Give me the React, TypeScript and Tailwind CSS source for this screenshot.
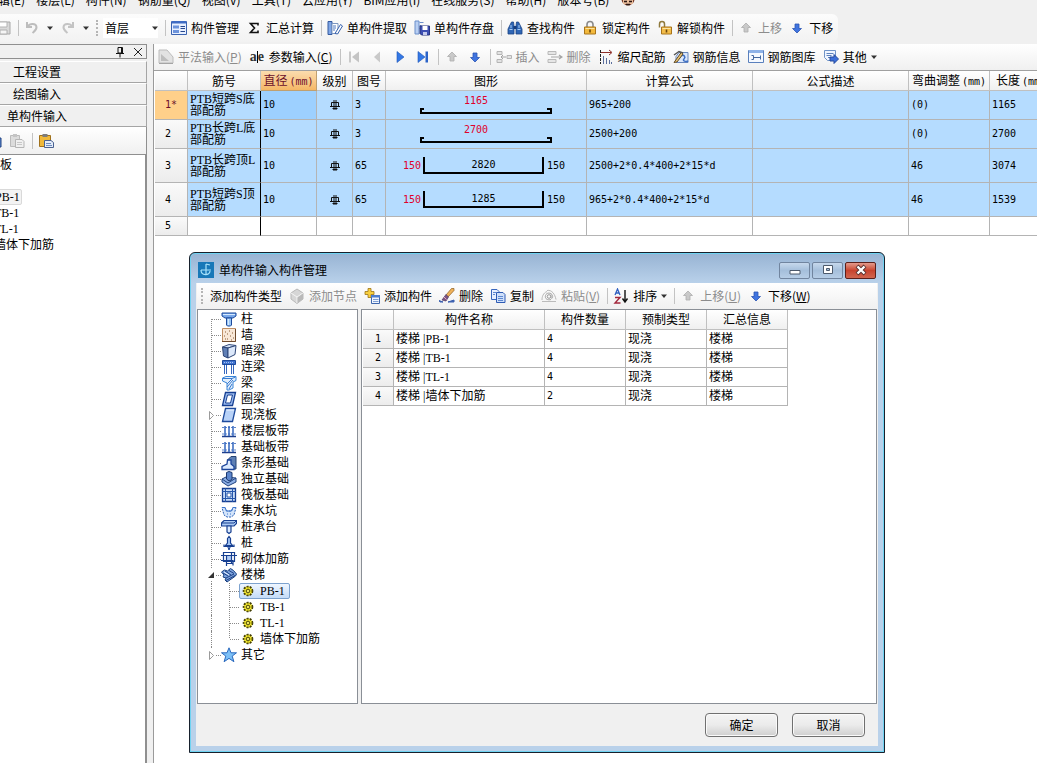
import React, { useState } from "react";

// 16x16 icon drawings, keyed by name
const icons: Record<string, React.ReactNode> = {
  save: (
    <>
      <path d="M1 2h14v12H1z" fill="#d9d9d9" stroke="#a8a8a8" />
      <path d="M4 2h8v5H4z" fill="#fff" stroke="#b5b5b5" />
      <path d="M5 10h7v4H5z" fill="#f5f5f5" stroke="#b0b0b0" />
    </>
  ),
  undo: <path d="M3 2v5h5M3.500 6.500C6 3 12 3 12.500 7c.3 2.500-2 4-4 6" fill="none" stroke="#bdbdbd" strokeWidth="2" />,
  redo: <path d="M13 2v5H8M12.500 6.500C10 3 4 3 3.500 7c-.3 2.500 2 4 4 6" fill="none" stroke="#c4c4c4" strokeWidth="2" />,
  manage: (
    <>
      <path d="M.5 1.500h15v13H.5z" fill="#e8f0ff" stroke="#3a62b0" />
      <path d="M1 1h14v2.500H1z" fill="#3f6cc4" />
      <path d="M2 5.500h6v3H2zM2 10h6v3H2z" fill="#6d94dc" />
      <path d="M9.500 6.500H14M9.500 8.500H14M9.500 11.500H14" stroke="#27488f" />
    </>
  ),
  sum: <path d="M12 5.500V3.500H4.500L8.500 8l-4 4.500H12v-2" fill="none" stroke="#111" strokeWidth="1.600" />,
  extract: (
    <>
      <path d="M1 1.500h4v13H1z" fill="#7fa6e6" stroke="#345a9f" />
      <path d="M5 3.500h6v10H5z" fill="#fff" stroke="#7d96bf" />
      <path d="M6 6h3M6 8h3M6 10h2" stroke="#5178bd" />
      <path d="M8 13.500l5.500-9 2 1.500-5 8z" fill="#fff" stroke="#3560ad" />
    </>
  ),
  store: (
    <>
      <path d="M1 1h4v13H1z" fill="#b8cef2" stroke="#6b8fca" />
      <path d="M5.500 2.500h4M5.500 5.500h2M5.500 8.500h1" stroke="#6b8fca" />
      <path d="M6 6h9.500v9H7.500L6 13.500z" fill="#3d4fb3" stroke="#27357f" />
      <path d="M8.500 6h5v4h-5z" fill="#fff" />
      <path d="M9 12h4v3H9z" fill="#c4cbee" />
    </>
  ),
  find: (
    <>
      <path d="M3 5l1.500-3h2L7 6v8H1V9zM13 5l-1.500-3h-2L9 6v8h6V9z" fill="#2f66b5" stroke="#1a4184" strokeWidth=".8" />
      <path d="M6.500 6h3v3h-3z" fill="#173d7d" />
      <path d="M2.500 9.500h3M10.500 9.500h3M4 5v3M12 5v3" stroke="#a9cbf4" />
    </>
  ),
  lock: (
    <>
      <path d="M5 8V4.500a3 3 0 016 0V8" fill="none" stroke="#8b8b8b" strokeWidth="1.600" />
      <path d="M2.500 7h11v7h-11z" fill="#f3b93c" stroke="#a8741a" />
      <path d="M3.500 8.500h9" stroke="#fce5a3" />
      <path d="M8 9.500v3" stroke="#6b460b" strokeWidth="1.600" />
    </>
  ),
  unlock: (
    <>
      <path d="M2.500 7.500V4a2.500 2.500 0 015 0v3" fill="none" stroke="#8f7a3d" strokeWidth="1.500" />
      <path d="M4.500 7h10v7h-10z" fill="#f3bd4a" stroke="#a8741a" />
      <path d="M5.500 8.500h8" stroke="#fce5a3" />
      <path d="M9.500 9.500v3" stroke="#6b460b" strokeWidth="1.600" />
    </>
  ),
  up: <path d="M8 3l4.500 4.500h-2.500V12H6V7.500H3.500z" fill="#c9c9c9" stroke="#adadad" strokeWidth=".8" />,
  down: <path d="M8 13l4.500-4.500h-2.500V4H6v4.500H3.500z" fill="#3f74e0" stroke="#2c55b3" strokeWidth=".8" />,
  flat: (
    <>
      <path d="M1 1h8l6 7v6H1z" fill="#e2e2e2" stroke="#bcbcbc" />
      <path d="M3 12V5l8 7z" fill="#bdbdbd" />
      <path d="M1 14.500h14" stroke="#a5a5a5" />
    </>
  ),
  first: (
    <>
      <path d="M3 2.500h2v11H3z" fill="#c9c9c9" />
      <path d="M13 2.500v11L6 8z" fill="#c4c4c4" />
    </>
  ),
  prev: <path d="M11 2.500v11L5 8z" fill="#c9c9c9" />,
  next: <path d="M5 2.500v11L12 8z" fill="#3478e5" stroke="#1f55b5" strokeWidth=".6" />,
  last: (
    <>
      <path d="M3 2.500v11l7-5.500z" fill="#3478e5" stroke="#1f55b5" strokeWidth=".6" />
      <path d="M10.500 2.500h2.500v11h-2.500z" fill="#2b63c8" />
    </>
  ),
  insert: (
    <>
      <path d="M1 2.500h5v3H1zM1 10.500h5v3H1z" fill="#e3e3e3" stroke="#b5b5b5" />
      <path d="M11 6.500h4.500v3H11z" fill="#e3e3e3" stroke="#b5b5b5" />
      <path d="M5 8h5M7 6L5 8l2 2" fill="none" stroke="#a2a2a2" />
    </>
  ),
  remove: (
    <>
      <path d="M1 2.500h8v3H1zM1 10.500h8v3H1z" fill="#e6e6e6" stroke="#b9b9b9" />
      <path d="M4 8h10M12 6l3 2-3 2" fill="none" stroke="#a5a5a5" strokeWidth="1.200" />
    </>
  ),
  scale: (
    <>
      <path d="M3 3.500h10M11 1l3 2.500L11 6" fill="none" stroke="#8e2f2a" />
      <path d="M2.500 1v14" stroke="#222" strokeDasharray="3 1" />
      <path d="M5.500 7v8M8.500 9v6M11.500 11v4M13.500 13v2" stroke="#5b6f9d" />
    </>
  ),
  rebarInfo: (
    <>
      <path d="M6 3.500h9v10H3v-6z" fill="#dbe7fb" stroke="#6887bd" />
      <path d="M8 7c3-2 5 1 3 3s2 3 4 2" fill="none" stroke="#3d6fc4" strokeWidth="1.500" />
      <path d="M1 13.500L8.500 3 10 5l-6 8z" fill="#eac474" stroke="#614b26" />
      <path d="M1 6l5-3.500 4 1.500" fill="none" stroke="#545454" strokeWidth="1.500" />
    </>
  ),
  library: (
    <>
      <path d="M.5 1.500h15v12H.5z" fill="#f5f9ff" stroke="#5a80bd" />
      <path d="M1 1h14v3H1z" fill="#8eb2e8" />
      <path d="M3.500 6.500h2v4h-2M5 8.500h7M12.500 6.500v4" stroke="#4468a0" fill="none" />
    </>
  ),
  other: (
    <>
      <path d="M1.500 1.500h11v10h-8l-3-3z" fill="#eff5ff" stroke="#6f93c7" />
      <path d="M3.500 4.500h7M3.500 6.500h5M5 8.500h3" stroke="#5d82bd" />
      <path d="M7 8h4V5.500l4.500 4.500-4.500 4.500V12H7z" fill="#3c6fd8" stroke="#244a9e" />
    </>
  ),
  pasteOff: (
    <>
      <path d="M1.500 2.500h9v11h-9z" fill="#dcdcdc" stroke="#bbb" />
      <path d="M4 1h4v3H4z" fill="#c4c4c4" />
      <path d="M6.500 6.500H13l2 2v6H6.500z" fill="#f0f0f0" stroke="#b5b5b5" />
      <path d="M8 9.500h5M8 11.500h5" stroke="#c8c8c8" />
    </>
  ),
  paste: (
    <>
      <path d="M1.500 2.500h11v11h-11z" fill="#f0b93a" stroke="#a0711c" />
      <path d="M4.500 1h5v3h-5z" fill="#7d7d7d" />
      <path d="M6.500 7.500H13l2.500 2v5h-9z" fill="#e3ecfa" stroke="#4a6291" />
      <path d="M8 10.500h5M8 12.500h6" stroke="#6f8cbd" />
    </>
  ),
  copyOn: <path d="M7 5h8v9H7z" fill="#5f8ad0" stroke="#1f4080" />,
  node: (
    <>
      <path d="M8 1l6 4v6l-6 4.500L2 11V5z" fill="#d6d6d6" stroke="#b8b8b8" />
      <path d="M2 5l6 4 6-4M8 9v6" fill="none" stroke="#f5f5f5" />
      <path d="M8.500 9.500L14 5.500V11l-5.500 4z" fill="#b9b9b9" />
    </>
  ),
  addPart: (
    <>
      <path d="M4 .5h3v3h3v3H7v3H4v-3H1v-3h3z" fill="#f8cf3f" stroke="#9c7514" strokeWidth=".8" />
      <path d="M7.500 7.500h8v8h-8z" fill="#eff5ff" stroke="#3e66ad" />
      <path d="M7 7h9v2.500H7z" fill="#4c7dd0" />
      <path d="M9 11.500h5.500M9 13.500h5.500" stroke="#7f9fd3" />
    </>
  ),
  brush: (
    <>
      <path d="M15 .5h-2.500L7 7l2 2 6-6.500z" fill="#f0b25a" stroke="#8a5b1f" strokeWidth=".7" />
      <path d="M7 6.500l2.500 2.500L7 13l-4-1z" fill="#7b5686" stroke="#4f3560" strokeWidth=".7" />
      <path d="M5 9l2.500 2.500" stroke="#e6a9b8" />
      <path d="M0 12.500l4 1.500h-3zM9 14l6-2v2z" fill="#4468b5" stroke="#3b5fae" />
    </>
  ),
  copy: (
    <>
      <path d="M1.500 1.500H7l2 2v8H1.500z" fill="#e7efff" stroke="#3967bd" />
      <path d="M6.500 4.500H13l2 2v8H6.500z" fill="#cfe0fb" stroke="#2e5bb4" />
      <path d="M3 4.500h3M3 6.500h2M8 8.500h5M8 10.500h5M8 12.500h5" stroke="#5e88d0" />
    </>
  ),
  pasteAt: (
    <>
      <path d="M1 12c0-3 1-7 5-8.500M6 2.500c5-1 8 4 9 9" fill="none" stroke="#b8b8b8" />
      <circle cx="8" cy="8.500" r="1.800" fill="none" stroke="#999" />
      <path d="M10 6.500v3.500c1 1 2 0 1.500-2.500-1-3-6-3.500-7 0s2.500 5 5.500 4" fill="none" stroke="#a5a5a5" />
      <path d="M1 13.500h14" stroke="#bbb" />
    </>
  ),
  sort: (
    <>
      <path d="M2 7l2.500-6L7 7M3 5h3" fill="none" stroke="#2f5fc0" strokeWidth="1.300" />
      <path d="M2 9.500h5L2 15h5.500" fill="none" stroke="#a3273c" strokeWidth="1.400" />
      <path d="M12 2v11M9.500 10.500L12 14l2.500-3.500" fill="none" stroke="#111" strokeWidth="1.400" />
    </>
  ),
  column: (
    <>
      <path d="M1 2h14v3l-3 2H4L1 5z" fill="#79a8ea" stroke="#1d4a9c" />
      <path d="M5.500 7h5v7l-1 1h-3l-1-1z" fill="#9cc8f6" stroke="#1d4a9c" />
      <path d="M2 3.500h12M7.500 8v6" stroke="#d6eaff" />
    </>
  ),
  wall: (
    <>
      <path d="M1.500 1.500h13v13h-13z" fill="#f8e8d8" stroke="#c08f64" />
      <path d="M4 5h1M8 4h1M11 6h1M6 7h1M3 9h1M9 9h1M12 11h1M6 12h1M10 13h1M4 12h1" stroke="#875a34" />
      <path d="M1 14.500h13.500V2" fill="none" stroke="#6e4a2d" />
    </>
  ),
  hiddenBeam: (
    <>
      <path d="M1.500 4L8 1.500l7 1L7 5z" fill="#d2e2f8" stroke="#3a4f7d" />
      <path d="M1.500 4L7 5v10l-4.500-2z" fill="#5f7fb5" stroke="#2d4576" />
      <path d="M7 5l8-2.500-1 9L7 15z" fill="#dce8fa" stroke="#2d4576" />
    </>
  ),
  linkBeam: (
    <>
      <path d="M1.500 1.500h13v4h-13z" fill="#3f72cf" stroke="#1d4a9c" />
      <path d="M3.500 6v9M5.500 6v9M10.500 6v9M12.500 6v9" stroke="#3567be" />
      <path d="M3 3.500h10" stroke="#a9c6f3" strokeDasharray="1 1" />
    </>
  ),
  beam: (
    <>
      <path d="M1.500 3L5 1.500h10v4L12 7v6l-4 2H6V8L1.500 6z" fill="#e1eefc" stroke="#3a86d8" />
      <path d="M2 3.500h9L14.500 2M6 9l5-5M6 12l6-7M8 14l3-5" fill="none" stroke="#3a7bd0" />
    </>
  ),
  ringBeam: (
    <>
      <path d="M4.500 1.500h10l-3 13h-10z" fill="#9dbdf0" stroke="#173f91" strokeWidth="1.300" />
      <path d="M6.500 4h5l-2 8h-5z" fill="#fff" stroke="#173f91" />
    </>
  ),
  slab: (
    <>
      <path d="M4.500 1.500h10l-3 13h-10z" fill="#b8d2f8" stroke="#1d4a9c" strokeWidth="1.300" />
      <path d="M5.500 3h7.500" stroke="#eef5ff" />
    </>
  ),
  strip: (
    <>
      <path d="M1 13.500h14" stroke="#1d3f8d" strokeWidth="1.500" />
      <path d="M1 4.500h14M1 11h14" stroke="#5f86cb" strokeDasharray="2 1" />
      <path d="M4 3v10M8 3v10M12 3v10" stroke="#3567be" strokeWidth="1.500" />
    </>
  ),
  stripBase: (
    <>
      <path d="M6.500 5L10 1.500h5V14h-3z" fill="#5d7fb4" stroke="#254273" />
      <path d="M6.500 5h3.500v4l3 2.500v3h-12v-3l5-2.500z" fill="#dcebff" stroke="#1c459b" strokeWidth="1.300" />
    </>
  ),
  soloBase: (
    <>
      <path d="M1 8l4-2 10 1v4l-8 4-6-4z" fill="#8eb0e6" stroke="#20427f" />
      <path d="M5.500 1.500L8 .5l3 1v7L8 10 5.500 8z" fill="#5c86cc" stroke="#1b386f" />
      <path d="M1 8l6 4 8-5" fill="none" stroke="#20427f" />
    </>
  ),
  raft: (
    <>
      <path d="M1.500 1.500h13v13h-13z" fill="#c7dcf8" stroke="#173f91" strokeWidth="1.300" />
      <path d="M4.500 1v14M11.500 1v14M1 4.500h14M1 11.500h14" stroke="#2556ab" />
      <path d="M6 6h4v4H6z" fill="#fff" stroke="#2556ab" />
    </>
  ),
  pit: (
    <>
      <path d="M1 4.500h3L5.500 8h5L12 4.500h3L13 12l-3 2H6l-3-2z" fill="#d4e5fb" stroke="#2c63b9" strokeDasharray="2 1" />
      <path d="M1 4.500h3L5.500 8h5L12 4.500h3M6 11h1M9 11h1" fill="none" stroke="#3c76cc" />
    </>
  ),
  pileCap: (
    <>
      <path d="M.5 4L3 1.500h12.500v3L13 7H.5z" fill="#a9c8f2" stroke="#173f91" strokeWidth="1.200" />
      <path d="M6 7h4v6l-2 1.500L6 13z" fill="#d9e9fd" stroke="#173f91" strokeWidth="1.200" />
      <path d="M1 4h12l2-2" fill="none" stroke="#173f91" />
    </>
  ),
  pile: (
    <>
      <path d="M6.500 3.500L8 1.500l1.500 2V8l2 2.500h-7l2-2.500z" fill="#a7c8f5" stroke="#173f91" strokeWidth="1.200" />
      <path d="M6.500 11h3L8 15z" fill="#a7c8f5" stroke="#173f91" />
      <path d="M3 9.500v2h10v-2" fill="none" stroke="#173f91" strokeWidth="1.200" />
    </>
  ),
  masonry: (
    <>
      <path d="M5 5h6v4H5z" fill="#aecbf5" />
      <path d="M2.500 1.500h11v9h-11zM0 4.500h16M0 9.500h12v5M5.500 4v11M10.500 1v11M5 12.500h7" fill="none" stroke="#173f91" strokeWidth="1.200" />
    </>
  ),
  stair: (
    <>
      <path d="M.5 5l3-2 3 1 3-2.500 3 2 3 3.500-1 2L6 15l-2-2 1-2-3-1 1-2z" fill="#7fa5df" stroke="#173f7f" />
      <path d="M2 6l5 3M4 4l6 4M8 3.500l5 3M5 11l8-4M5 13.500l9-5" fill="none" stroke="#1b3f85" />
      <path d="M3 5l5 3" stroke="#e5f0ff" />
    </>
  ),
  star: <path d="M8 .8l2 5h5.500l-4.300 3.300 1.700 5.600L8 11.400l-4.900 3.300 1.700-5.600L.5 5.800H6z" fill="#7cc0f7" stroke="#2a68bd" />,
  gear: (
    <>
      <circle cx="8" cy="8" r="4.500" fill="#f5ea2c" stroke="#3f3a08" strokeWidth="1.600" strokeDasharray="2 1.200" />
      <path d="M8 3v10M3 8h10M4.500 4.500l7 7M11.500 4.500l-7 7" stroke="#6f6812" strokeWidth=".6" />
      <circle cx="8" cy="8" r="1.600" fill="#fff66b" stroke="#3f3a08" strokeWidth=".8" />
    </>
  ),
};

function Icon({ name }: { name: string }) {
  return (
    <svg className="size-4 shrink-0" viewBox="0 0 16 16" aria-hidden="true">
      {icons[name]}
    </svg>
  );
}

// "a|e" mark of the parameter input command
function ParamIcon() {
  return (
    <span className="flex w-4 shrink-0 items-center justify-center font-['Liberation_Serif',serif] text-sm leading-4 font-bold text-[#333]">
      a<span className="h-3 w-px bg-black" />e
    </span>
  );
}

function Sep() {
  return <span className="-mr-0.5 h-4 w-px shrink-0 bg-[#c3c3c3]" />;
}

function Grip() {
  return <span className="h-4 w-0 shrink-0 border-l-2 border-dotted border-[#b5b5b5]" />;
}

function Arrow() {
  return (
    <svg className="h-4 w-1.5 shrink-0" viewBox="0 0 6 16" aria-hidden="true">
      <path d="M0 6.500h6L3 10z" fill="#333" />
    </svg>
  );
}

type ToolProps = { icon?: string; label?: string; hotkey?: string; disabled?: boolean; arrow?: boolean; title?: string };

function Tool({ icon, label, hotkey, disabled, arrow, title }: ToolProps) {
  return (
    <button
      type="button"
      disabled={disabled}
      aria-label={label ? undefined : title}
      className="flex shrink-0 items-center gap-1 whitespace-nowrap text-black disabled:text-[#8c8c8c]"
    >
      {icon === "param" ? <ParamIcon /> : icon && <Icon name={icon} />}
      {label && (
        <span>
          {label}
          {hotkey && <>(<u>{hotkey}</u>)</>}
        </span>
      )}
      {arrow && <Arrow />}
    </button>
  );
}

const menus = ["编辑(E)", "楼层(L)", "构件(N)", "钢筋量(Q)", "视图(V)", "工具(T)", "云应用(Y)", "BIM应用(I)", "在线服务(S)", "帮助(H)", "版本号(B)"];

type Bar = { no: string; name: string; height: string; shape: "hook" | "u"; code: string; size: string; formula: string; bend: string; length: string };

const bars: Bar[] = [
  { no: "1*", name: "PTB短跨S底部配筋", height: "h-[29px]", shape: "hook", code: "3", size: "1165", formula: "965+200", bend: "(0)", length: "1165" },
  { no: "2", name: "PTB长跨L底部配筋", height: "h-[29px]", shape: "hook", code: "3", size: "2700", formula: "2500+200", bend: "(0)", length: "2700" },
  { no: "3", name: "PTB长跨顶L部配筋", height: "h-[34px]", shape: "u", code: "65", size: "2820", formula: "2500+2*0.4*400+2*15*d", bend: "46", length: "3074" },
  { no: "4", name: "PTB短跨S顶部配筋", height: "h-[34px]", shape: "u", code: "65", size: "1285", formula: "965+2*0.4*400+2*15*d", bend: "46", length: "1539" },
];

function BarShape({ shape, size }: { shape: "hook" | "u"; size: string }) {
  if (shape === "hook") {
    return (
      <div className="flex flex-col items-center">
        <span className="pr-5 leading-3 text-[#e0002a]">{size}</span>
        <svg className="h-2 w-[132px]" viewBox="0 0 132 8" aria-hidden="true">
          <path d="M4 2H1v4h130V2h-4" fill="none" stroke="#000" strokeWidth="2" />
        </svg>
      </div>
    );
  }
  return (
    <div className="flex items-center justify-center gap-0.5 pr-1">
      <span className="text-[#e0002a]">150</span>
      <span className="h-[17px] w-[121px] border-x-2 border-b-2 border-black text-center leading-4">{size}</span>
      <span className="pl-px">150</span>
    </div>
  );
}

const cell = "border-r border-b border-[#b4b4b4] px-0.5";
const headCell = "border-r border-b border-[#c0c0c0] bg-linear-to-b from-white to-[#f0f0f0] p-0 font-normal whitespace-nowrap";

function Unit() {
  return <span className="ml-0.5 font-['DejaVu_Sans_Mono',monospace] text-[10px]">(mm)</span>;
}

function BarTable() {
  return (
    <table className="w-full table-fixed border-separate border-spacing-0 text-xs leading-3">
      <colgroup>
        <col className="w-[33px]" />
        <col className="w-[73px]" />
        <col className="w-14" />
        <col className="w-9" />
        <col className="w-[33px]" />
        <col className="w-[201px]" />
        <col className="w-[166px]" />
        <col className="w-[156px]" />
        <col className="w-[81px]" />
        <col />
      </colgroup>
      <thead>
        <tr className="h-5">
          <th className={headCell} aria-label="序号" />
          <th className={headCell}>筋号</th>
          <th className="border-r border-b border-[#c0a070] bg-linear-to-b from-[#fbdcae] to-[#f5b765] p-0 font-normal whitespace-nowrap text-[#6b0f2b]">
            直径<Unit />
          </th>
          <th className={headCell}>级别</th>
          <th className={headCell}>图号</th>
          <th className={headCell}>图形</th>
          <th className={headCell}>计算公式</th>
          <th className={headCell}>公式描述</th>
          <th className={headCell}>弯曲调整<Unit /></th>
          <th className="overflow-hidden border-b border-[#c0c0c0] bg-linear-to-b from-white to-[#f0f0f0] p-0 pl-1.5 text-left font-normal whitespace-nowrap">
            长度<Unit />
          </th>
        </tr>
      </thead>
      <tbody className="font-['DejaVu_Sans_Mono',monospace] text-[10px]">
        {bars.map((bar, i) => (
          <tr key={bar.no} className={`${bar.height} bg-[#b5dcff]`}>
            <th className={`${cell} text-center font-normal ${i === 0 ? "bg-[#ffd08a] pr-0.5 text-[#6b0f2b]" : "bg-linear-to-b from-[#fafafa] to-[#ececec] pr-2"}`}>
              {bar.no}
            </th>
            <td className="border-r border-b border-r-black border-b-[#b4b4b4] px-0.5 font-['Liberation_Serif','Noto_Sans_CJK_SC',serif] text-xs leading-3">
              {bar.name}
            </td>
            <td className={`${cell} ${i === 0 ? "bg-[#9dd0ff]" : ""}`}>10</td>
            <td className={cell}>
              <svg className="mx-auto h-3 w-3" viewBox="0 0 12 12" aria-label="三级钢">
                <path d="M5 1v10M7 1v10M2.500 3.500h7v4M2.500 3.500v4M1 7.500h10M3.500 9.500h5" fill="none" stroke="#111" />
              </svg>
            </td>
            <td className={cell}>{bar.code}</td>
            <td className={cell}><BarShape shape={bar.shape} size={bar.size} /></td>
            <td className={`${cell} whitespace-nowrap`}>{bar.formula}</td>
            <td className={cell} />
            <td className={cell}>{bar.bend}</td>
            <td className="border-b border-[#b4b4b4] px-0.5">{bar.length}</td>
          </tr>
        ))}
        <tr className="h-[19px]">
          <th className={`${cell} bg-linear-to-b from-[#fafafa] to-[#ececec] pr-2 text-center font-normal`}>5</th>
          <td className="border-r border-b border-r-black border-b-[#b4b4b4]" />
          <td className={cell} />
          <td className={cell} />
          <td className={cell} />
          <td className={cell} />
          <td className={cell} />
          <td className={cell} />
          <td className={cell} />
          <td className="border-b border-[#b4b4b4]" />
        </tr>
      </tbody>
    </table>
  );
}

function SidePanel() {
  return (
    <aside className="flex w-[147px] shrink-0 flex-col overflow-hidden">
      <div className="flex h-[15px] items-center justify-end gap-2 border border-l-0 border-[#8f8f8f] pr-[3px]">
        <button type="button" aria-label="固定">
          <svg className="h-3 w-2.5" viewBox="0 0 10 12" aria-hidden="true">
            <path d="M3 1.500h4.500V7H3zM1 7.500h8M5 8v3.500M6.500 2v5" fill="none" stroke="#111" />
          </svg>
        </button>
        <button type="button" aria-label="关闭面板">
          <svg className="h-3 w-2.5" viewBox="0 0 10 12" aria-hidden="true">
            <path d="M1 2l8 8M9 2l-8 8" stroke="#222" />
          </svg>
        </button>
      </div>
      <nav className="mt-0.5 flex flex-col">
        {["工程设置", "绘图输入", "单构件输入"].map((item) => (
          <button key={item} type="button" className="h-[22px] border-t border-r border-b border-[#a5a5a5] border-t-white bg-[#f0f0f0] pr-[72px] text-center leading-5">
            {item}
          </button>
        ))}
      </nav>
      <div className="flex h-7 items-center gap-[7px] border-r border-b border-[#8f8f8f] bg-linear-to-b from-white to-[#f0f0f0]">
        <span className="-ml-3.5 flex"><Tool icon="copyOn" title="复制" /></span>
        <Tool icon="pasteOff" title="粘贴" disabled />
        <Sep />
        <Tool icon="paste" title="粘贴构件" />
      </div>
      <div className="grow border-r-2 border-[#8f8f8f] bg-white pt-0.5 font-['Liberation_Serif','Noto_Sans_CJK_SC',serif] leading-4">
        <div className="mb-4">板</div>
        <ul className="-ml-1.5">
          <li className="w-7 rounded-xs border border-[#d9d9d9] bg-[#f3f3f3] leading-[14px]">PB-1</li>
          <li>TB-1</li>
          <li>TL-1</li>
          <li>墙体下加筋</li>
        </ul>
      </div>
    </aside>
  );
}

type TreeNode = { icon: string; label: string; expander?: "open" | "closed" };

const nodes: TreeNode[] = [
  { icon: "column", label: "柱" },
  { icon: "wall", label: "墙" },
  { icon: "hiddenBeam", label: "暗梁" },
  { icon: "linkBeam", label: "连梁" },
  { icon: "beam", label: "梁" },
  { icon: "ringBeam", label: "圈梁" },
  { icon: "slab", label: "现浇板", expander: "closed" },
  { icon: "strip", label: "楼层板带" },
  { icon: "strip", label: "基础板带" },
  { icon: "stripBase", label: "条形基础" },
  { icon: "soloBase", label: "独立基础" },
  { icon: "raft", label: "筏板基础" },
  { icon: "pit", label: "集水坑" },
  { icon: "pileCap", label: "桩承台" },
  { icon: "pile", label: "桩" },
  { icon: "masonry", label: "砌体加筋" },
  { icon: "stair", label: "楼梯", expander: "open" },
];

const stairs = ["PB-1", "TB-1", "TL-1", "墙体下加筋"];

// dotted elbow in front of a tree node
function Branch({ first, last, expander }: { first?: boolean; last?: boolean; expander?: "open" | "closed" }) {
  return (
    <svg className="h-4 w-4 shrink-0" viewBox="0 0 16 16" aria-hidden="true">
      <path d={first ? "M6.500 8v8" : last ? "M6.500 0v8" : "M6.500 0v16"} stroke="#8a8a8a" strokeDasharray="1 1" />
      <path d="M7 8.500h9" stroke="#8a8a8a" strokeDasharray="1 1" />
      {expander && <path d="M2 2h9v12H2z" fill="#fff" />}
      {expander === "closed" && <path d="M4.500 4.500v8l4-4z" fill="#fff" stroke="#9a9a9a" />}
      {expander === "open" && <path d="M9 5v6H3z" fill="#333" />}
    </svg>
  );
}

function TreeRow({ node, first, last }: { node: TreeNode; first?: boolean; last?: boolean }) {
  return (
    <div className="flex h-4 items-center">
      <Branch expander={node.expander} first={first} last={last} />
      <Icon name={node.icon} />
      <span className="ml-1">{node.label}</span>
    </div>
  );
}

function PartTree() {
  const [selected, setSelected] = useState("PB-1");

  return (
    <div className="w-[161px] shrink-0 border border-[#8a8f96] bg-white pt-px pl-[7px] font-['Liberation_Serif','Noto_Sans_CJK_SC',serif]">
      {nodes.map((node, i) => (
        <TreeRow key={node.label} node={node} first={i === 0} />
      ))}
      {stairs.map((stair, i) => (
        <div key={stair} className="flex h-4 items-center">
          <span className="ml-1.5 h-4 w-3 border-l border-dotted border-[#8a8a8a]" />
          <Branch last={i === stairs.length - 1} />
          <button
            type="button"
            onClick={() => setSelected(stair)}
            className={`flex h-4 items-center gap-1 rounded-xs border pr-1 leading-[14px] ${
              selected === stair ? "border-[#7da2ce] bg-linear-to-b from-[#eff6ff] to-[#c5dcf8]" : "border-transparent"
            }`}
          >
            <Icon name="gear" />
            {stair}
          </button>
        </div>
      ))}
      <TreeRow node={{ icon: "star", label: "其它", expander: "closed" }} last />
    </div>
  );
}

const parts = [
  { name: "PB-1", count: 4 },
  { name: "TB-1", count: 4 },
  { name: "TL-1", count: 4 },
  { name: "墙体下加筋", count: 2 },
];

function PartTable() {
  const td = "border-r border-b border-[#b4b4b4] px-0.5 py-0";
  return (
    <table className="w-[425px] table-fixed border-separate border-spacing-0 font-['Liberation_Serif','Noto_Sans_CJK_SC',serif] leading-4">
      <colgroup>
        <col className="w-[31px]" />
        <col className="w-[151px]" />
        <col className="w-[81px]" />
        <col className="w-[81px]" />
        <col className="w-[81px]" />
      </colgroup>
      <thead>
        <tr className="h-5">
          <th className={headCell} aria-label="序号" />
          <th className={headCell}>构件名称</th>
          <th className={headCell}>构件数量</th>
          <th className={headCell}>预制类型</th>
          <th className={headCell}>汇总信息</th>
        </tr>
      </thead>
      <tbody>
        {parts.map((part, i) => (
          <tr key={part.name} className="h-[19px]">
            <th className={`${td} bg-linear-to-b from-[#fafafa] to-[#ececec] text-center font-['DejaVu_Sans_Mono',monospace] text-[10px] font-normal`}>
              {i + 1}
            </th>
            <td className={td}>楼梯 |{part.name}</td>
            <td className={`${td} font-['DejaVu_Sans_Mono',monospace] text-[10px]`}>{part.count}</td>
            <td className={td}>现浇</td>
            <td className={td}>楼梯</td>
          </tr>
        ))}
      </tbody>
    </table>
  );
}

function WindowButton({ kind }: { kind: "min" | "max" | "close" }) {
  const label = { min: "最小化", max: "最大化", close: "关闭" }[kind];
  return (
    <button
      type="button"
      aria-label={label}
      className={`flex h-[17px] w-[31px] items-center justify-center rounded-xs border ${
        kind === "close"
          ? "border-[#5b1f1a] bg-linear-to-b from-[#e39a8c] via-[#c8432e] to-[#d0654f]"
          : "border-[#71859f] bg-linear-to-b from-[#c6d8ec] via-[#a5bfdb] to-[#b6cde6]"
      }`}
    >
      <svg className="h-3 w-3.5" viewBox="0 0 14 12" aria-hidden="true">
        {kind === "min" && <path d="M2 6.500h10v3.500H2z" fill="#fff" stroke="#4d5a6c" />}
        {kind === "max" && (
          <>
            <path d="M2.500 1.500h9v8h-9z" fill="#fff" stroke="#4d5a6c" />
            <path d="M5.500 4.500h3v2h-3z" fill="#a5bfdb" stroke="#4d5a6c" />
          </>
        )}
        {kind === "close" && (
          <>
            <path d="M3 2l8 8M11 2l-8 8" stroke="#54302e" strokeWidth="4" />
            <path d="M3.500 2.500l7 7M10.500 2.500l-7 7" stroke="#fff" strokeWidth="2.400" />
          </>
        )}
      </svg>
    </button>
  );
}

function PartDialog({ onClose }: { onClose: () => void }) {
  const button =
    "h-6 w-[73px] rounded-sm border border-[#707070] bg-linear-to-b from-[#f4f4f4] via-[#ebebeb] to-[#cfcfcf] shadow-[inset_0_0_0_1px_#fafafa]";
  return (
    <section
      role="dialog"
      aria-labelledby="dialog-title"
      className="absolute top-[252px] left-[189px] flex h-[501px] w-[696px] flex-col rounded-t-md border border-[#17202c] bg-[#b9cfe8] bg-linear-to-b from-[#97b3d3] to-[#b9d1ea] to-[30px] px-1.5 pb-1.5 shadow-[inset_0_0_0_1px_#6fd3f2]"
    >
      <header className="flex h-[30px] shrink-0 items-center gap-[5px] px-0.5 pt-1">
        <svg className="size-4" viewBox="0 0 16 16" aria-hidden="true">
          <path d="M0 0h16v16H0z" fill="#1878b8" />
          <path d="M8 2v11M3 8h10M3 8c0 6 9 6 9 1M8 2l4 1" fill="none" stroke="#a9e3fb" strokeWidth="1.200" />
        </svg>
        <h2 id="dialog-title" className="grow">单构件输入构件管理</h2>
        <div className="flex gap-0.5">
          <WindowButton kind="min" />
          <WindowButton kind="max" />
          <WindowButton kind="close" />
        </div>
      </header>
      <div className="flex min-h-0 grow flex-col bg-[#f0f0f0] px-px">
        <div className="flex h-[26px] shrink-0 items-center gap-[7px] bg-linear-to-b from-white to-[#f0f0f0] pl-1">
          <Grip />
          <Tool label="添加构件类型" />
          <Tool icon="node" label="添加节点" disabled />
          <Tool icon="addPart" label="添加构件" />
          <Tool icon="brush" label="删除" />
          <Tool icon="copy" label="复制" />
          <Tool icon="pasteAt" label="粘贴" hotkey="V" disabled />
          <Sep />
          <Tool icon="sort" label="排序" arrow />
          <Sep />
          <Tool icon="up" label="上移" hotkey="U" disabled />
          <Tool icon="down" label="下移" hotkey="W" />
        </div>
        <div className="flex min-h-0 grow gap-[3px]">
          <PartTree />
          <div className="grow border border-[#8a8f96] bg-white pl-px">
            <PartTable />
          </div>
        </div>
        <footer className="flex h-[42px] shrink-0 items-center justify-end gap-3.5 pr-3">
          <button type="button" className={button} onClick={onClose}>确定</button>
          <button type="button" className={button} onClick={onClose}>取消</button>
        </footer>
      </div>
    </section>
  );
}

export default function App() {
  const [dialogOpen, setDialogOpen] = useState(true);

  return (
    <div className="relative flex min-h-screen flex-col overflow-hidden bg-[#f0f0f0] font-['Noto_Sans_CJK_SC',sans-serif] text-xs leading-4 text-black">
      {/* 菜单栏 */}
      <nav className="flex h-3.5 shrink-0 items-end gap-[11px] overflow-hidden pb-1.5 whitespace-nowrap">
        {menus.map((menu) => (
          <button key={menu} type="button" className="shrink-0 first:-ml-3.5">{menu}</button>
        ))}
        <svg className="size-4 shrink-0" viewBox="0 0 16 16" aria-hidden="true">
          <circle cx="8" cy="7" r="6.500" fill="#7a3c28" />
          <path d="M3 8h10v4H3z" fill="#e9bd9c" />
          <path d="M4 9.500h3M9 9.500h3M6 12.500h4" stroke="#2b1712" strokeWidth="1.500" />
        </svg>
      </nav>

      {/* 主工具栏 */}
      <div className="flex h-7 w-[838px] shrink-0 items-center gap-[7px] rounded-r-md bg-linear-to-b from-[#fcfcfc] to-[#f2f2f2]">
        <span className="-ml-[5px] flex"><Tool icon="save" title="保存" disabled /></span>
        <Sep />
        <Tool icon="undo" title="撤销" disabled />
        <Arrow />
        <Tool icon="redo" title="恢复" disabled />
        <Arrow />
        <Grip />
        <div className="relative -ml-0.5 flex w-[55px] shrink-0 items-center bg-white">
          <select aria-label="楼层" className="h-5 w-full appearance-none bg-white pl-0.5">
            <option>首层</option>
          </select>
          <span className="pointer-events-none absolute right-0 flex"><Arrow /></span>
        </div>
        <Sep />
        <Tool icon="manage" label="构件管理" />
        <Tool icon="sum" label="汇总计算" />
        <Sep />
        <Tool icon="extract" label="单构件提取" />
        <Tool icon="store" label="单构件存盘" />
        <Sep />
        <Tool icon="find" label="查找构件" />
        <Tool icon="lock" label="锁定构件" />
        <Tool icon="unlock" label="解锁构件" />
        <Sep />
        <Tool icon="up" label="上移" disabled />
        <Tool icon="down" label="下移" />
      </div>

      <div className="mt-0.5 flex grow">
        <SidePanel />
        <main className="ml-1.5 flex min-w-0 grow flex-col border-l border-[#9a9a9a] bg-white">
          <div className="flex h-[27px] shrink-0 items-center gap-[7px] border-b border-[#a0a0a0] bg-linear-to-b from-white to-[#f0f0f0] pl-1">
            <Tool icon="flat" label="平法输入" hotkey="P" disabled />
            <Tool icon="param" label="参数输入" hotkey="C" />
            <Sep />
            <Tool icon="first" title="第一条" disabled />
            <Tool icon="prev" title="上一条" disabled />
            <Tool icon="next" title="下一条" />
            <Tool icon="last" title="最后一条" />
            <Sep />
            <Tool icon="up" title="上移" disabled />
            <Tool icon="down" title="下移" />
            <Sep />
            <Tool icon="insert" label="插入" disabled />
            <Tool icon="remove" label="删除" disabled />
            <Tool icon="scale" label="缩尺配筋" />
            <Tool icon="rebarInfo" label="钢筋信息" />
            <Tool icon="library" label="钢筋图库" />
            <Tool icon="other" label="其他" arrow />
          </div>
          <div className="pl-px">
            <BarTable />
          </div>
        </main>
      </div>

      {dialogOpen && <PartDialog onClose={() => setDialogOpen(false)} />}
    </div>
  );
}
